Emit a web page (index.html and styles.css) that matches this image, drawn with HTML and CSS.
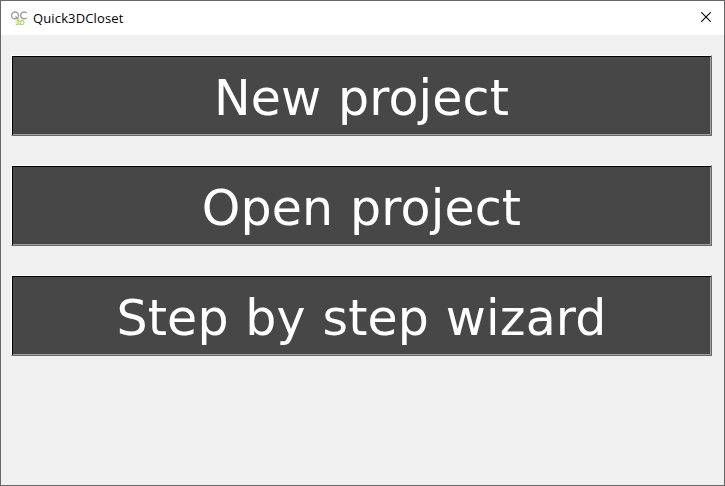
FILE: index.html
```html
<!DOCTYPE html>
<html lang="en">
<head>
	<meta charset="UTF-8">
	<title>Quick3DCloset</title>
	<link rel="stylesheet" href="styles.css">
</head>
<body>
	<div class="window">
		<div class="titlebar">
			<svg class="logo" width="18" height="16" viewBox="0 0 18 16">
				<ellipse cx="5" cy="5.4" rx="3.5" ry="3.4" fill="none" stroke="#a0a0a0" stroke-width="1.4"/>
				<path d="M5.5 6.6l3.2 3M16.8 3.2a3.5 3.4 0 1 0 0 4.4" fill="none" stroke="#a0a0a0" stroke-width="1.4"/>
				<text class="logo-text" x="5.6" y="14.8">3D</text>
			</svg>
			<span class="title">Quick3DCloset</span>
			<svg class="close" width="10" height="10" viewBox="0 0 10 10">
				<path d="M.3 .3l9.4 9.4M9.7 .3l-9.4 9.4" stroke="#000" stroke-width="1.1"/>
			</svg>
		</div>
		<div class="content">
			<button class="action">New project</button>
			<button class="action">Open project</button>
			<button class="action">Step by step wizard</button>
		</div>
	</div>
</body>
</html>
```
FILE: styles.css
```css
body {
	margin: 0;
}
.window {
	box-sizing: border-box;
	height: 486px;
	border: 1px solid #666;
	background: #f0f0f0;
}
.titlebar {
	display: flex;
	align-items: center;
	height: 34px;
	padding: 0 13px 0 9px;
	background: #fff;
}
.logo-text {
	font: italic bold 7px "Liberation Sans", sans-serif;
	fill: #a4cf3e;
}
.title {
	flex: 1;
	margin-left: 5px;
	font: 13px "Open Sans", sans-serif;
	letter-spacing: 0.14px;
	color: #000;
}
.close {
	margin-bottom: 2px;
}
.content {
	display: flex;
	flex-direction: column;
	gap: 29px;
	padding: 20px 12px 0 10px;
}
.action {
	box-sizing: border-box;
	height: 81px;
	padding: 5px 0 0;
	background: #474747;
	border: 1px solid;
	border-color: #fff #696969 #696969 #fff;
	box-shadow: inset 1px 1px #000, inset -1px -1px #a0a0a0;
	color: #fff;
	font: 49px "DejaVu Sans", sans-serif;
	letter-spacing: 0.15px;
	word-spacing: 1px;
	white-space: nowrap;
}
```
